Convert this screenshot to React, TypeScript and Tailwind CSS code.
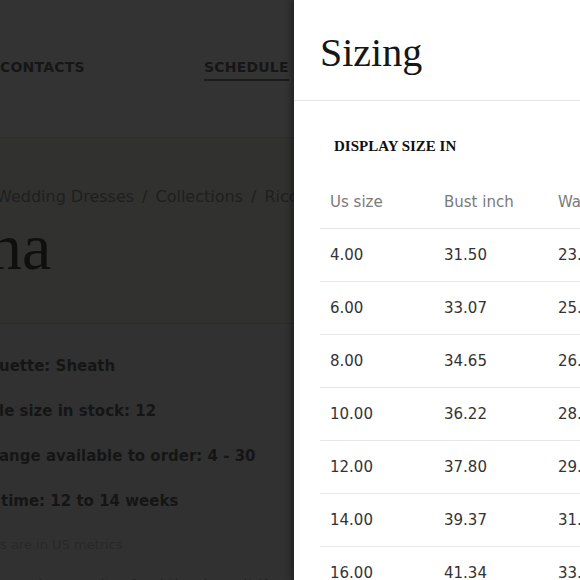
import React from 'react';

const rows = [
  ['4.00', '31.50', '23.'],
  ['6.00', '33.07', '25.'],
  ['8.00', '34.65', '26.'],
  ['10.00', '36.22', '28.'],
  ['12.00', '37.80', '29.'],
  ['14.00', '39.37', '31.5'],
  ['16.00', '41.34', '33.'],
];

const sans = "font-['DejaVu_Sans',sans-serif]";

export default function App() {
  return (
    <div className="w-[580px] h-[580px] overflow-hidden flex bg-[#313131]">
      {/* dimmed page behind the drawer */}
      <div className={`w-[294px] shrink-0 overflow-hidden ${sans}`}>
        <div className="h-[137px] bg-[#333333] pt-[58px] flex items-start whitespace-nowrap">
          <div className="w-[204px] shrink-0 text-[14px] font-bold tracking-[0.2px] text-[#161616] leading-[18px]">CONTACTS</div>
          <div className="text-[14px] font-bold tracking-[0.2px] text-[#161616] leading-[18px] pb-[3px] border-b-2 border-[#1c1c1c]">SCHEDULE</div>
        </div>
        <div className="h-[186px] bg-[#313130] border-t border-[#2e2e2e] pt-[50px] whitespace-nowrap">
          <div className="-ml-[4px] text-[16px] text-[#1f1f1f] leading-[18px] flex gap-[8px]">
            <span>Wedding Dresses</span><span>/</span><span>Collections</span><span>/</span><span>Ricca</span>
          </div>
          <div className="-ml-[11px] mt-[6px] text-[66px] leading-[70px] text-[#0f0f0f] font-['Liberation_Serif',serif]">na</div>
        </div>
        <div className="border-t border-[#2b2b2b] pt-[33px] whitespace-nowrap text-[#151515]">
          <div className="flex flex-col gap-[27px] text-[15px] font-bold leading-[18px]">
            <div className="-ml-[1px]">uette: Sheath</div>
            <div className="-ml-[1px]">le size in stock: 12</div>
            <div className="-ml-[1px]">ange available to order: 4 - 30</div>
            <div className="ml-[1px]">time: 12 to 14 weeks</div>
          </div>
          <div className="mt-[27px] text-[13px] leading-[16px] text-[#282828]">s are in US metrics</div>
          <div className="mt-[24px] text-[15px] leading-[18px] text-[#232323]">e and we can't refund the deposit if a dress is availa</div>
        </div>
      </div>

      {/* sizing drawer */}
      <div className="flex-1 min-w-0 bg-white shadow-[-3px_0_6px_rgba(0,0,0,0.35)] overflow-hidden">
        <div className="w-[420px]">
          <div className="h-[101px] border-b border-[#e5e5e5] pl-[26px] flex items-center">
            <h2 className="font-['Liberation_Serif',serif] text-[40px] leading-none text-[#161616] mt-[6px]">Sizing</h2>
          </div>
          <div className="pl-[40px] pt-[36px] font-['Liberation_Serif',serif] font-bold text-[15px] leading-[18px] text-[#111]">
            DISPLAY SIZE IN
          </div>
          <div className={`ml-[26px] mt-[21px] ${sans}`}>
            <div className="flex h-[53px] items-center border-b border-[#e8e8e8] text-[15px] text-[#7a7a7a]">
              <div className="w-[114px] pl-[10px]">Us size</div>
              <div className="w-[114px] pl-[10px]">Bust inch</div>
              <div className="w-[114px] pl-[10px]">Waist inch</div>
            </div>
            {rows.map((r) => (
              <div key={r[0]} className="flex h-[53px] items-center border-b border-[#e8e8e8] text-[15px] text-[#333333]">
                {r.map((c, i) => (
                  <div key={i} className="w-[114px] pl-[10px]">{c}</div>
                ))}
              </div>
            ))}
          </div>
        </div>
      </div>
    </div>
  );
}
